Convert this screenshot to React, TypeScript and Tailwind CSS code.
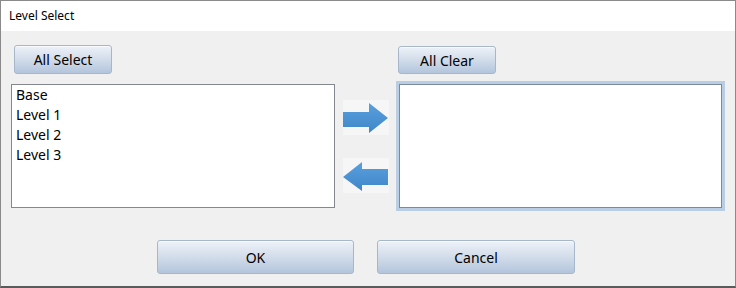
import React from "react";

const font = { fontFamily: '"Noto Sans", "Open Sans", sans-serif' };

function GlossButton({ label, className }: { label: string; className: string }) {
  return (
    <button
      className={`flex items-center justify-center rounded-[3px] border border-[#a7b7cb] bg-gradient-to-b from-[#eef2f8] via-[#d2dcea] to-[#b3c5dc] text-[14px] text-black shadow-[inset_0_1px_0_#f8fafd] ${className}`}
    >
      {label}
    </button>
  );
}

function ArrowButton({ dir }: { dir: "right" | "left" }) {
  return (
    <div className="flex h-[35px] w-[46px] items-center justify-center bg-[#f6f6f6]">
      <svg width="46" height="32" viewBox="0 0 46 32">
        <defs>
          <linearGradient id={`ag-${dir}`} x1="0" y1="0" x2="0" y2="1">
            <stop offset="0" stopColor="#5aa0de" />
            <stop offset="1" stopColor="#3f86c9" />
          </linearGradient>
        </defs>
        {dir === "right" ? (
          <polygon points="0,10 26,10 26,1 45,16 26,31 26,25 0,25" fill={`url(#ag-${dir})`} />
        ) : (
          <polygon points="45,9 19,9 19,2 0,17 19,31 19,25 45,25" fill={`url(#ag-${dir})`} />
        )}
      </svg>
    </div>
  );
}

const levels = ["Base", "Level 1", "Level 2", "Level 3"];

export default function App() {
  return (
    <div
      style={font}
      className="flex h-[288px] w-[736px] flex-col overflow-hidden border-x border-t border-b-2 border-x-[#8a8a8a] border-t-[#8a8a8a] border-b-[#5a5a5a] bg-[#f0f0f0] text-black"
    >
      <header className="flex h-[30px] shrink-0 items-center bg-white pl-2 text-[12px]">Level Select</header>

      <div className="flex pl-[10px] pr-[10px] pt-[14px]">
        <div className="flex w-[324px] flex-col">
          <GlossButton label="All Select" className="ml-[3px] h-[29px] w-[98px]" />
          <ul className="mt-[10px] h-[124px] border border-[#828790] bg-white pl-1 text-[14px] leading-[20px]">
            {levels.map((l) => (
              <li key={l}>{l}</li>
            ))}
          </ul>
        </div>

        <div className="flex w-[61px] flex-col pl-[8px] pt-[55px]">
          <ArrowButton dir="right" />
          <div className="mt-[23px]">
            <ArrowButton dir="left" />
          </div>
        </div>

        <div className="flex flex-1 flex-col">
          <GlossButton label="All Clear" className="ml-[2px] mt-[1px] h-[28px] w-[98px]" />
          <div className="mt-[7px] h-[130px] border-[3px] border-[#b9cde5]">
            <div className="h-full border border-[#7d8898] bg-white" />
          </div>
        </div>
      </div>

      <div className="flex gap-[23px] pl-[156px] pt-[29px]">
        <GlossButton label="OK" className="h-[34px] w-[197px]" />
        <GlossButton label="Cancel" className="h-[34px] w-[198px]" />
      </div>
    </div>
  );
}
